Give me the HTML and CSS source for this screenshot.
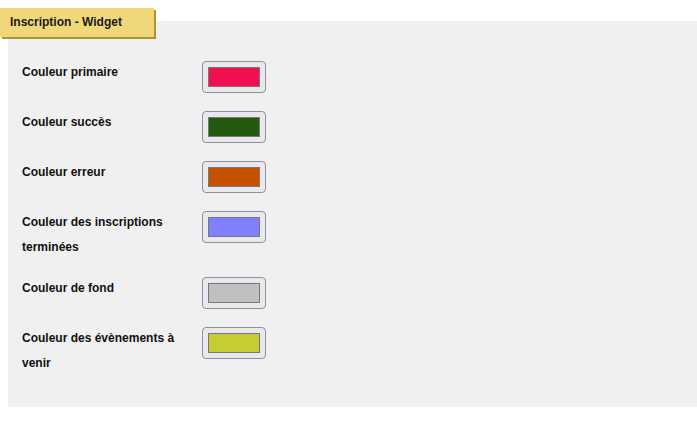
FILE: index.html
```html
<!DOCTYPE html>
<html lang="fr">
<head>
    <meta charset="UTF-8">
    <meta name="viewport" content="width=device-width, initial-scale=1.0">
    <title>Inscription - Widget</title>
    <link rel="stylesheet" href="styles.css">
</head>
<body>
    <section class="panel">
        <h2 class="panel-tab">Inscription - Widget</h2>
        <div class="color-list">
            <div class="color-row">
                <label for="c-primary">Couleur primaire</label>
                <input type="color" id="c-primary" value="#f0104f">
            </div>
            <div class="color-row">
                <label for="c-success">Couleur succès</label>
                <input type="color" id="c-success" value="#245a10">
            </div>
            <div class="color-row">
                <label for="c-error">Couleur erreur</label>
                <input type="color" id="c-error" value="#c65200">
            </div>
            <div class="color-row">
                <label for="c-done">Couleur des inscriptions terminées</label>
                <input type="color" id="c-done" value="#8080ff">
            </div>
            <div class="color-row">
                <label for="c-bg">Couleur de fond</label>
                <input type="color" id="c-bg" value="#c0c0c0">
            </div>
            <div class="color-row">
                <label for="c-upcoming">Couleur des évènements à venir</label>
                <input type="color" id="c-upcoming" value="#c6cd32">
            </div>
        </div>
    </section>
</body>
</html>
```
FILE: styles.css
```css
body {
    margin: 0;
    padding: 21px 0 0 8px;
    font-family: "Liberation Sans", Arial, sans-serif;
    background-color: #fff;
    color: #111;
}

.panel {
    position: relative;
    background-color: #f0f0f0;
    padding: 40px 0 32px 14px;
}

.panel-tab {
    position: absolute;
    top: -13px;
    left: -8px;
    margin: 0;
    width: 154px;
    height: 29px;
    box-sizing: border-box;
    padding: 0 0 0 10px;
    background-color: #f0d87a;
    box-shadow: 2px 2px 0 #ab9536;
    font-size: 12px;
    font-weight: bold;
    line-height: 29px;
    color: #1a1a1a;
}

.color-row {
    display: grid;
    grid-template-columns: 180px auto;
    align-items: start;
    margin-bottom: 18px;
}

.color-row:last-child {
    margin-bottom: 0;
}

.color-row label {
    font-size: 12px;
    font-weight: bold;
    line-height: 24.5px;
    margin-top: -1px;
}

input[type="color"] {
    width: 64px;
    height: 32px;
    margin: 0;
    padding: 5px;
    box-sizing: border-box;
    border: 1px solid #8f8f9d;
    border-radius: 4px;
    background-color: #e9e9ed;
}

input[type="color"]::-webkit-color-swatch-wrapper {
    padding: 0;
}

input[type="color"]::-webkit-color-swatch {
    border: 1px solid #777;
    border-radius: 0;
}
```
